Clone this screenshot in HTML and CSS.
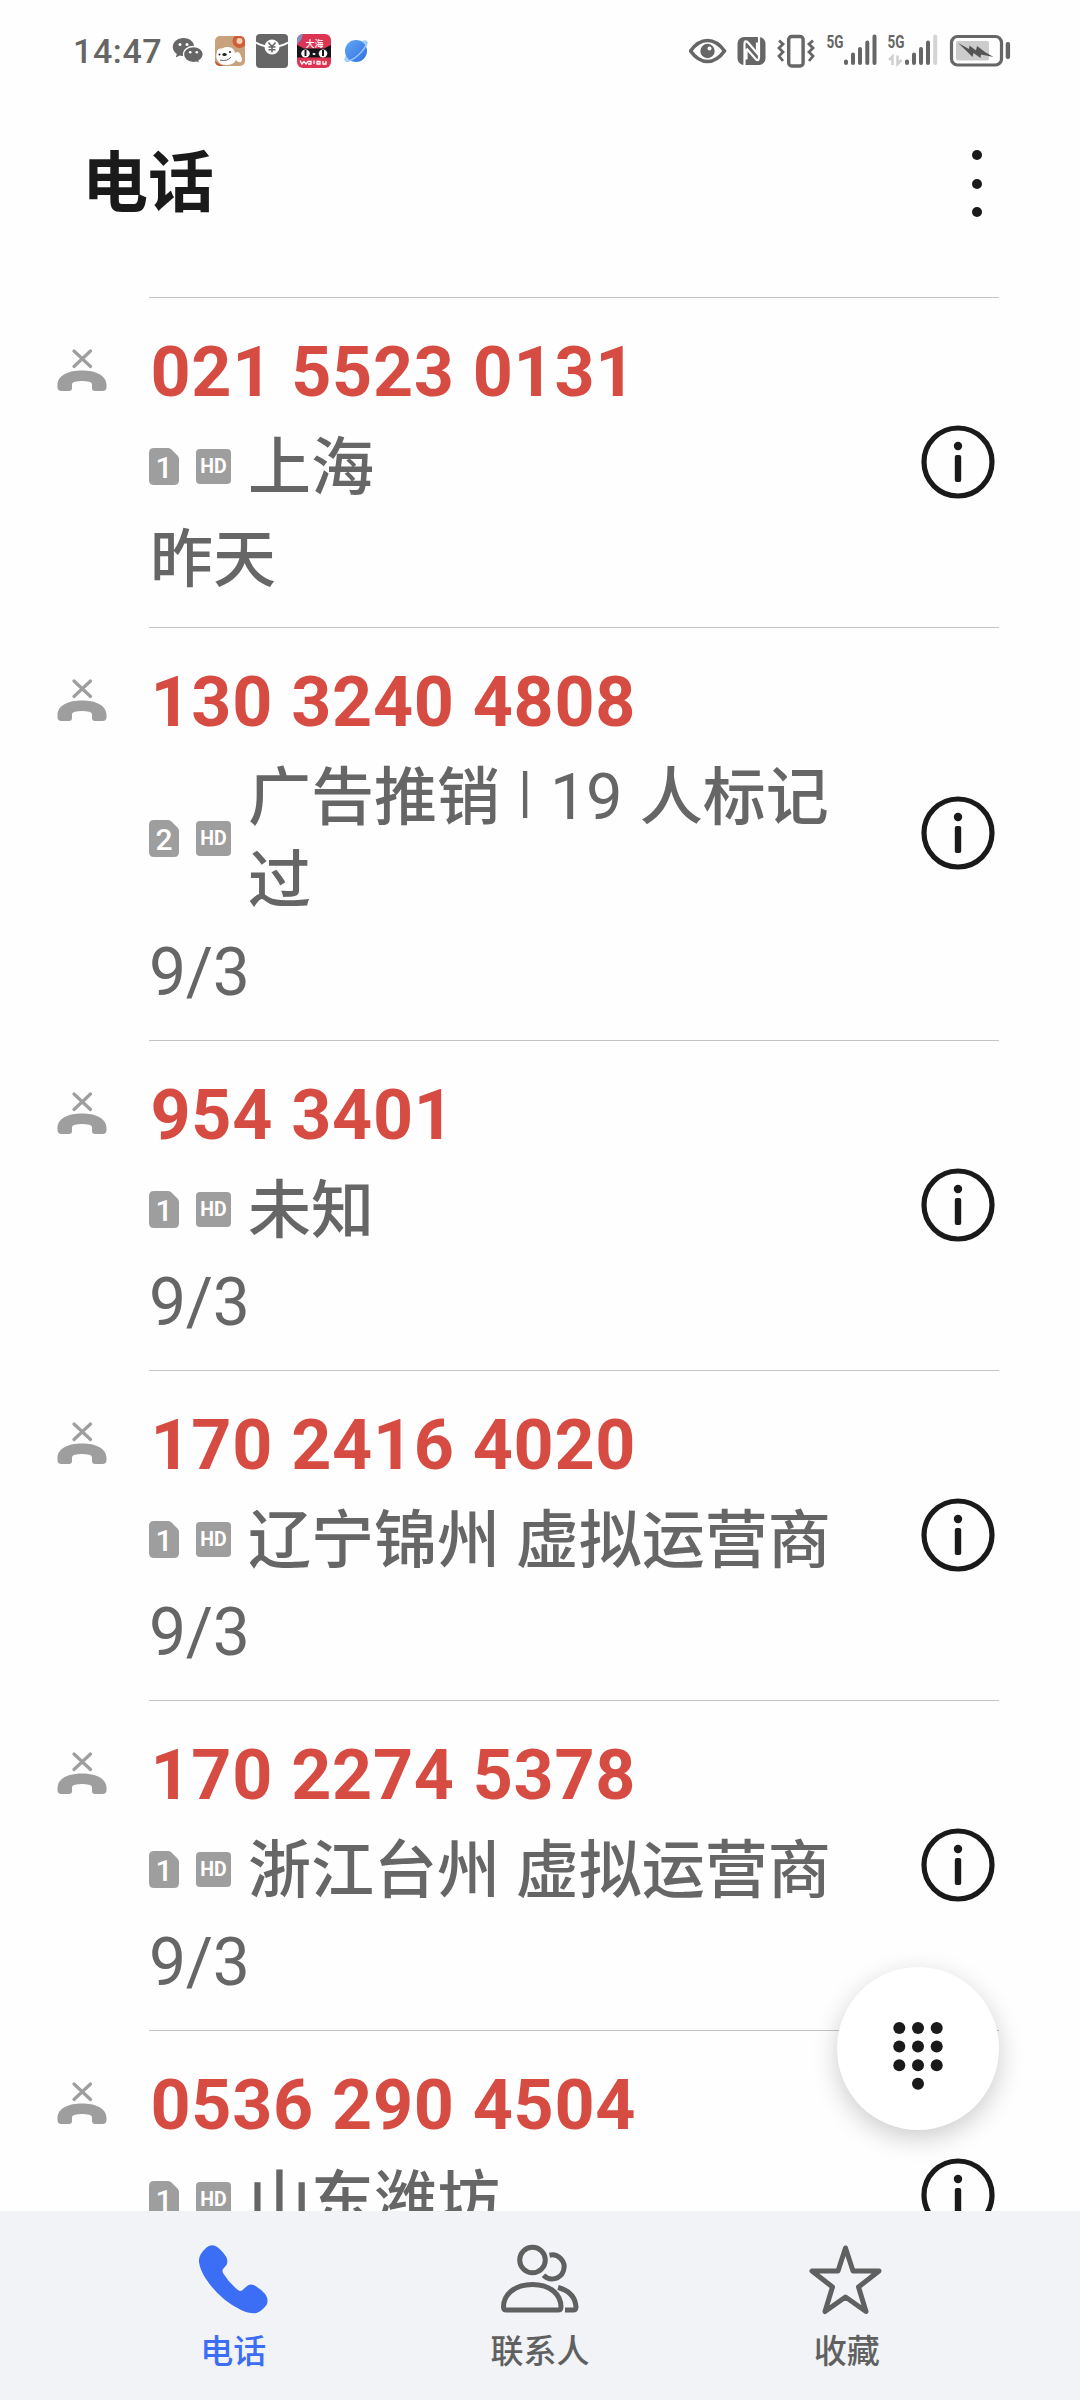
FILE: index.html
```html
<!DOCTYPE html>
<html lang="zh-CN">
<head>
<meta charset="utf-8">
<title>电话</title>
<link rel="stylesheet" href="styles.css">
</head>
<body>
<svg class="defs" width="0" height="0" aria-hidden="true">
  <symbol id="missed" viewBox="0 0 50 42">
    <path d="M17 2L33.500 17.500M33.500 2L17 17.500" fill="none" stroke="#9e9e9e" stroke-width="3.200" stroke-linecap="round"/>
    <path d="M0.500 36C0.500 26 12 21.500 25 21.500S49.500 26 49.500 36V38Q49.500 42 45.500 42H38Q35 42 35 39V35.500Q35 33.500 33 33Q25 31 17 33Q15 33.500 15 35.500V39Q15 42 12 42H4.500Q.5 42 .5 38Z" fill="#9e9e9e"/>
  </symbol>
  <symbol id="sim" viewBox="0 0 30 37">
    <path d="M5 0H19.500Q21 0 22.500 1.500L28.500 7.500Q30 9 30 11V32Q30 37 25 37H5Q0 37 0 32V5Q0 0 5 0Z" fill="#9e9e9e"/>
  </symbol>
  <symbol id="info" viewBox="0 0 74 74">
    <circle cx="37" cy="37" r="34" fill="none" stroke="#1a1a1a" stroke-width="5.200"/>
    <circle cx="37" cy="21" r="4.200" fill="#1a1a1a"/>
    <rect x="33.800" y="30" width="6.400" height="27" rx="2" fill="#1a1a1a"/>
  </symbol>
</svg>

<header class="status">
  <div class="status-left">
    <span class="clock">14:47</span>
    <svg class="app" width="32" height="28" viewBox="0 0 32 28">
      <path d="M11.500 1C5.200 1 .8 5 .8 10c0 3 1.500 5.300 4 7L3.800 20.500l4-2.100c1.500.4 2.500.5 3.700.5C17.800 18.900 22.300 15 22.300 10S17.800 1 11.500 1Z" fill="#666"/>
      <path d="M21.500 9.500c-5.600 0-10 3.500-10 8.100s4.400 8 10 8c1 0 2.200-.2 3.200-.5l3.200 1.800-.9-3c2.600-1.600 4.200-3.700 4.200-6.300 0-4.600-4.200-8.100-9.700-8.100Z" fill="#666" stroke="#fff" stroke-width="1.300"/>
      <g fill="#fff"><circle cx="8" cy="7.500" r="1.500"/><circle cx="15" cy="7.500" r="1.500"/><circle cx="18.200" cy="15.200" r="1.300"/><circle cx="24.800" cy="15.200" r="1.300"/></g>
    </svg>
    <svg class="app dog" width="30" height="30" viewBox="0 0 30 30">
      <clipPath id="dogclip"><rect width="30" height="30" rx="5"/></clipPath>
      <g clip-path="url(#dogclip)">
        <rect width="30" height="30" fill="#c7a27c"/>
        <circle cx="24.500" cy="5" r="7" fill="#cf5f38"/><circle cx="24.500" cy="5" r="3" fill="#f3d0b5"/>
        <path d="M2 16Q2 12 7 12.500Q12 10 17 12Q20 14 20 17Q24 14 26 20Q28 24 26 26Q23 27 21 24Q19 29 11 29Q5 29 3 25Q0 22 2 16Z" fill="#fff"/>
        <path d="M0 25Q5 30 12 30H0Z" fill="#c94f35"/>
        <path d="M5 24Q12 26 16 21" fill="none" stroke="#666" stroke-width="1"/>
        <ellipse cx="9.500" cy="18.500" rx="2.200" ry="1.600" fill="#222"/><circle cx="4.500" cy="18.500" r="1" fill="#222"/><circle cx="15" cy="16" r="1" fill="#222"/>
      </g>
    </svg>
    <svg class="app mail" width="32" height="34" viewBox="0 0 32 34">
      <rect width="32" height="34" rx="4" fill="#666"/>
      <path d="M0 8.500Q5 12 16 13Q27 12 32 8.500" fill="none" stroke="#fff" stroke-width="2"/>
      <circle cx="16" cy="13" r="7.500" fill="#fff"/>
      <path d="M12.500 8.500L16 12.500L19.500 8.500M16 12.500V18.500M12.500 13H19.500M12.500 15.800H19.500" fill="none" stroke="#666" stroke-width="1.500"/>
    </svg>
    <svg class="app cat" width="34" height="34" viewBox="0 0 34 34">
      <clipPath id="catclip"><rect width="34" height="34" rx="6"/></clipPath>
      <g clip-path="url(#catclip)">
        <rect width="34" height="34" fill="#dc3554"/>
        <path d="M0 0H6L4 6L0 10Z" fill="#7d93c4"/>
        <path d="M0 11L7 14.500H27L34 11V23.500H0Z" fill="#17151a"/>
        <ellipse cx="8.500" cy="19.500" rx="4.300" ry="4" fill="#fff"/><ellipse cx="26" cy="19.500" rx="4.300" ry="4" fill="#fff"/>
        <path d="M8.500 16V22M26 16V22" stroke="#17151a" stroke-width="2"/>
        <ellipse cx="17" cy="20" rx="1.500" ry="1" fill="#fff"/>
        <text x="17.500" y="12.500" class="cat-top">大海</text>
        <path d="M3 26.500L5 30L7 27.500L9 30L11 27.500H14V30H11M17 26.500V30M20 27.500H23V30H20ZM26 27V30H29V27" fill="none" stroke="#fff" stroke-width="1.300"/>
      </g>
    </svg>
    <svg class="app planet" width="26" height="26" viewBox="0 0 26 26">
      <defs><linearGradient id="pg" x1="0" y1="0" x2="1" y2="1"><stop offset="0" stop-color="#62a8f5"/><stop offset="1" stop-color="#2f6fe2"/></linearGradient></defs>
      <ellipse cx="13" cy="13" rx="15" ry="5" transform="rotate(-42 13 13)" fill="#a5d0fa"/>
      <circle cx="13" cy="13" r="11" fill="url(#pg)"/>
      <path d="M3 23.500C10 23 22 13 24 4" fill="none" stroke="#9dcbfa" stroke-width="1.200"/>
    </svg>
  </div>
  <div class="status-right">
    <svg width="322" height="36" viewBox="689 33 322 36">
      <path d="M690.500 51Q698 40.500 707.500 40.500T724.500 51Q717 61.500 707.500 61.500T690.500 51Z" fill="none" stroke="#666" stroke-width="3.600" stroke-linejoin="round"/>
      <circle cx="707.500" cy="51" r="7.200" fill="#666"/><circle cx="709.500" cy="48.500" r="2" fill="#fff"/>
      <rect x="737.500" y="37" width="28" height="28" rx="6.500" fill="#666"/>
      <path d="M744.500 65V44Q744.500 39.500 748 42.500L757 53V42.500M746.500 49.500V59.500M746.500 48.500L756 59.500Q759 61.500 759 57V37" fill="none" stroke="#fff" stroke-width="2.200"/>
      <rect x="788.700" y="36.500" width="14.400" height="29.500" rx="3" fill="none" stroke="#666" stroke-width="3.400"/>
      <path d="M779 40.500L783 44L779 48L783 52L779 56L783 61M813 40.500L809 44L813 48L809 52L813 56L809 61" fill="none" stroke="#666" stroke-width="2.800"/>
      <text x="826.500" y="47.800" class="net" textLength="17" lengthAdjust="spacingAndGlyphs">5G</text>
      <path d="M846 61.500V63M853 54.500V63M860 49V63M867.300 42.500V63M874.500 36.500V63" stroke="#666" stroke-width="4" stroke-linecap="round"/>
      <text x="887.500" y="47.800" class="net" textLength="17" lengthAdjust="spacingAndGlyphs">5G</text>
      <path d="M907 61.500V63M914 54.500V63M921 49V63M928 42.500V63" stroke="#666" stroke-width="4" stroke-linecap="round"/>
      <path d="M935.200 36.500V63" stroke="#d4d4d4" stroke-width="4" stroke-linecap="round"/>
      <path d="M892.500 65V56.500L889 60M897.500 55.500V64L901.500 60" fill="none" stroke="#d0d0d0" stroke-width="2.500"/>
      <rect x="951.500" y="36.500" width="50" height="28.500" rx="6" fill="none" stroke="#666" stroke-width="3.200"/>
      <rect x="956" y="41" width="33" height="19.500" rx="2" fill="#ccc"/>
      <path d="M958 43L969 49L969.500 45.500L976 50.500L977 46L985 52L993.500 57L981 54.500L980.500 58L973.500 53L972.500 57L966 50.500Z" fill="#555"/>
      <rect x="1005.700" y="42" width="4.400" height="17" rx="2" fill="#666"/>
    </svg>
  </div>
</header>

<div class="titlebar">
  <h1 class="title">电话</h1>
  <div class="more"><i></i><i></i><i></i></div>
</div>

<main class="calls">
  <article class="call">
    <svg class="missed"><use href="#missed"/></svg>
    <div class="body">
      <div class="detail">
        <div class="number">021 5523 0131</div>
        <div class="meta"><span class="sim"><svg><use href="#sim"/></svg><b>1</b></span><span class="hd">HD</span><span class="place">上海</span></div>
        <div class="date">昨天</div>
      </div>
      <svg class="info"><use href="#info"/></svg>
    </div>
  </article>
  <article class="call">
    <svg class="missed"><use href="#missed"/></svg>
    <div class="body">
      <div class="detail">
        <div class="number">130 3240 4808</div>
        <div class="meta"><span class="sim"><svg><use href="#sim"/></svg><b>2</b></span><span class="hd">HD</span><span class="place">广告推销<span class="bar">|</span><span class="count">19</span> 人标记过</span></div>
        <div class="date num">9/3</div>
      </div>
      <svg class="info"><use href="#info"/></svg>
    </div>
  </article>
  <article class="call">
    <svg class="missed"><use href="#missed"/></svg>
    <div class="body">
      <div class="detail">
        <div class="number">954 3401</div>
        <div class="meta"><span class="sim"><svg><use href="#sim"/></svg><b>1</b></span><span class="hd">HD</span><span class="place">未知</span></div>
        <div class="date num">9/3</div>
      </div>
      <svg class="info"><use href="#info"/></svg>
    </div>
  </article>
  <article class="call">
    <svg class="missed"><use href="#missed"/></svg>
    <div class="body">
      <div class="detail">
        <div class="number">170 2416 4020</div>
        <div class="meta"><span class="sim"><svg><use href="#sim"/></svg><b>1</b></span><span class="hd">HD</span><span class="place">辽宁锦州 虚拟运营商</span></div>
        <div class="date num">9/3</div>
      </div>
      <svg class="info"><use href="#info"/></svg>
    </div>
  </article>
  <article class="call">
    <svg class="missed"><use href="#missed"/></svg>
    <div class="body">
      <div class="detail">
        <div class="number">170 2274 5378</div>
        <div class="meta"><span class="sim"><svg><use href="#sim"/></svg><b>1</b></span><span class="hd">HD</span><span class="place">浙江台州 虚拟运营商</span></div>
        <div class="date num">9/3</div>
      </div>
      <svg class="info"><use href="#info"/></svg>
    </div>
  </article>
  <article class="call">
    <svg class="missed"><use href="#missed"/></svg>
    <div class="body">
      <div class="detail">
        <div class="number">0536 290 4504</div>
        <div class="meta"><span class="sim"><svg><use href="#sim"/></svg><b>1</b></span><span class="hd">HD</span><span class="place">山东潍坊</span></div>
        <div class="date"></div>
      </div>
      <svg class="info"><use href="#info"/></svg>
    </div>
  </article>
</main>

<button class="fab" aria-label="拨号">
  <svg width="50" height="68" viewBox="0 0 50 68" fill="#1a1a1a">
    <circle cx="6.300" cy="6" r="6"/><circle cx="25" cy="6" r="6"/><circle cx="43.700" cy="6" r="6"/>
    <circle cx="6.300" cy="24.600" r="6"/><circle cx="25" cy="24.600" r="6"/><circle cx="43.700" cy="24.600" r="6"/>
    <circle cx="6.300" cy="43.200" r="6"/><circle cx="25" cy="43.200" r="6"/><circle cx="43.700" cy="43.200" r="6"/>
    <circle cx="25" cy="61.800" r="6"/>
  </svg>
</button>

<nav class="tabs">
  <a class="tab active">
    <svg width="80" height="72" viewBox="0 0 80 72"><path d="M13.500 4.500Q18 1 22.500 3Q28 6 33 13.500Q35.500 18 33.500 22L30 26Q29 28 30 30Q36 40 45 47Q47 48.500 49 47.500L53.500 43.500Q56.500 40.500 60.500 42Q67 45 72.500 51.500Q76 57 73.500 62Q69 68 63.500 70Q57 71 48 67Q27 57 13 36Q7 27 6 19Q5 12 13.500 4.500Z" fill="#3c6df5"/></svg>
    <span>电话</span>
  </a>
  <a class="tab">
    <svg width="80" height="72" viewBox="0 0 80 72" fill="none" stroke="#606060" stroke-width="5">
      <circle cx="32.500" cy="17" r="12.800"/>
      <path d="M49.500 12.200A12 12 0 1 1 43.500 32.300"/>
      <path d="M32.500 41.500C14 41.500 3.500 52 3.500 64Q3.500 67 6.500 67H58Q61 67 61 64C61 52 51 41.500 32.500 41.500Z" stroke-linejoin="round"/>
      <path d="M58 44.500Q75 49 76 64Q76 67 73 67H65"/>
    </svg>
    <span>联系人</span>
  </a>
  <a class="tab">
    <svg width="80" height="72" viewBox="0 0 80 72"><path d="M38.500 5L46 28H72L51.500 44L59 68.500L38.500 54L18 68.500L25.500 44L5 28H31Z" fill="none" stroke="#606060" stroke-width="5" stroke-linejoin="round"/></svg>
    <span>收藏</span>
  </a>
</nav>
</body>
</html>
```

FILE: styles.css
```css
* { box-sizing: border-box; }

body {
  margin: 0;
  width: 1080px;
  height: 2400px;
  overflow: hidden;
  display: flex;
  flex-direction: column;
  position: relative;
  background: #fefefe;
  font-family: Roboto, "Noto Sans CJK SC", sans-serif;
  color: #666;
}

svg { display: block; flex: none; }
.defs { position: absolute; }

.status {
  height: 102px;
  flex: none;
  display: flex;
  justify-content: space-between;
  align-items: center;
  padding: 0 69px 0 73px;
}
.status-left { display: flex; align-items: center; }
.clock {
  width: 99px;
  font-size: 34px;
  font-weight: 500;
  line-height: 40px;
  letter-spacing: 0.6px;
}
.dog { margin-left: 11px; }
.mail { margin-left: 11px; }
.cat { margin-left: 9px; }
.planet { margin-left: 12px; }
.cat-top { font: 500 9px "Noto Sans CJK SC", sans-serif; fill: #fff; text-anchor: middle; }
.net { font: 700 17.500px Roboto, sans-serif; fill: #666; }

.titlebar {
  height: 195px;
  flex: none;
  display: flex;
  justify-content: space-between;
  align-items: flex-start;
  padding: 48px 98px 0 82px;
}
.title {
  margin: 1px 0 0;
  font-size: 66px;
  line-height: 66px;
  font-weight: 700;
  color: #1a1a1a;
}
.more { display: flex; flex-direction: column; gap: 18.500px; }
.more i { width: 10px; height: 10px; border-radius: 50%; background: #1a1a1a; }

.calls {
  height: 1914px;
  flex: none;
  overflow: hidden;
}
.call {
  display: flex;
  align-items: flex-start;
  padding: 0 81px 0 57px;
}
.missed { width: 50px; height: 42px; margin: 52px 42px 0 0; }
.body {
  flex: 1;
  min-height: 330px;
  display: flex;
  justify-content: space-between;
  align-items: center;
  border-top: 1px solid #c4c4c4;
}
.detail { width: 690px; padding: 33px 0 26px; }
.number {
  padding-left: 1.500px;
  font-size: 70px;
  line-height: 82px;
  font-weight: 700;
  letter-spacing: 0.700px;
  white-space: nowrap;
  color: #d64c43;
}
.meta { display: flex; align-items: center; margin-top: 13px; }
.sim {
  width: 30px;
  height: 37px;
  display: grid;
  flex: none;
  margin: 0 17px 2px 0;
}
.sim > * { grid-area: 1 / 1; width: 30px; height: 37px; }
.sim b {
  z-index: 1;
  color: #fff;
  font-size: 30px;
  line-height: 40px;
  font-weight: 500;
  text-align: center;
}
.hd {
  width: 35px;
  height: 35px;
  flex: none;
  margin: 0 17px 2px 0;
  border-radius: 4px;
  background: #9e9e9e;
  color: #fff;
  font-size: 19.500px;
  line-height: 36px;
  font-weight: 700;
  text-align: center;
}
.place, .date { font-size: 63px; line-height: 83px; font-weight: 500; }
.place { flex: 1; }
.bar {
  display: inline-block;
  width: 50px;
  font-size: 55px;
  line-height: 50px;
  text-align: center;
  vertical-align: 8px;
}
.count { line-height: 1; font-size: 65px; font-weight: 400; letter-spacing: -0.500px; margin-right: 2px; }
.date { height: 83px; margin-top: 9px; padding-left: 1px; }
.date.num { padding-left: 0; font-size: 66px; font-weight: 400; letter-spacing: -0.300px; }
.info { width: 74px; height: 74px; margin: 0 4px 2px 0; }

.fab {
  position: absolute;
  left: 837px;
  top: 1967px;
  width: 162px;
  height: 163px;
  padding: 55px 0 0;
  border: 0;
  border-radius: 50%;
  background: #fff;
  box-shadow: 0 8px 26px rgba(0, 0, 0, 0.2);
  display: flex;
  justify-content: center;
  align-items: flex-start;
}

.tabs {
  height: 189px;
  flex: none;
  display: flex;
  padding: 32px 80px 0;
  background: #f1f3f7;
}
.tab {
  flex: 1;
  display: flex;
  flex-direction: column;
  align-items: center;
  font-size: 33px;
  line-height: 40px;
  font-weight: 500;
  color: #606060;
}
.tab span { margin-top: 17px; }
.tab.active { color: #3c6df5; }
```
